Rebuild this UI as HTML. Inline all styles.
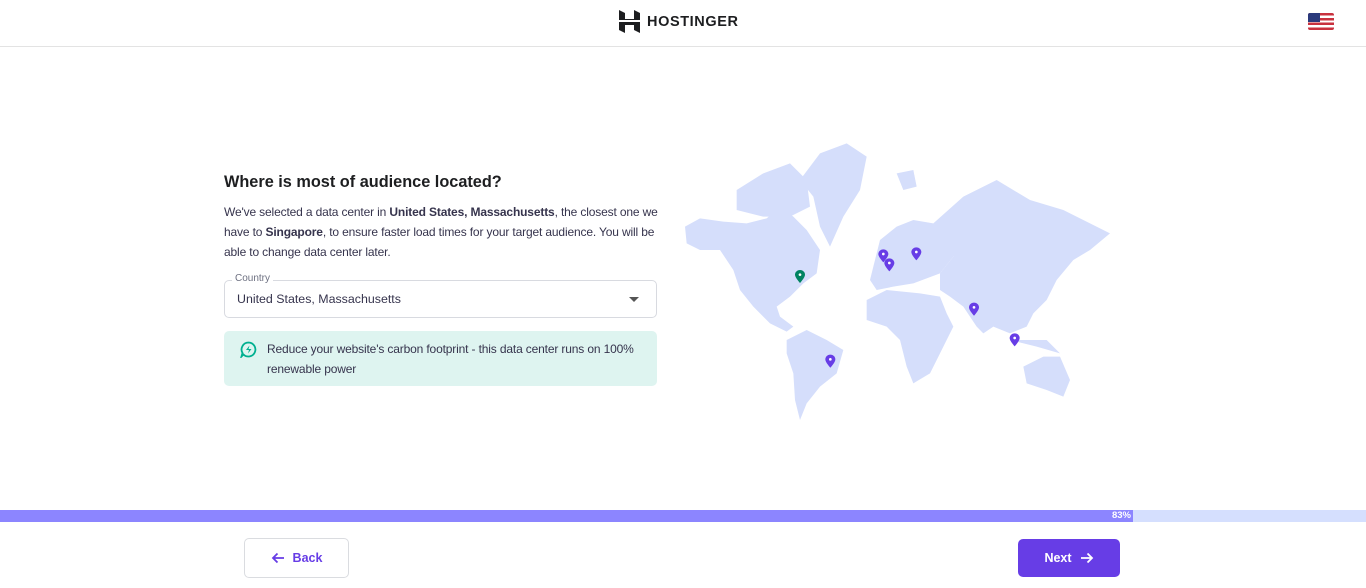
<!DOCTYPE html>
<html><head><meta charset="utf-8"><style>
*{margin:0;padding:0;box-sizing:border-box}
body{width:1366px;height:588px;overflow:hidden;background:#fff;font-family:"Liberation Sans",sans-serif;color:#1d1e20;position:relative}
.hdr{position:absolute;left:0;top:0;width:1366px;height:47px;border-bottom:1px solid #e3e3e3}
.logo{position:absolute;left:619px;top:10px;display:flex;align-items:center}
.logo span{font-weight:700;font-size:14.5px;letter-spacing:0.6px;margin-left:7px;color:#1d1e20}
.flag{position:absolute;left:1308px;top:13px;width:26px;height:17px;border-radius:2px;overflow:hidden;background:repeating-linear-gradient(#c8313e 0 2.43px,#fff 2.43px 4.86px)}
.flag i{position:absolute;left:0;top:0;width:12px;height:9px;background:#2a3a7c}
h1{position:absolute;left:224px;top:173px;font-size:16.3px;font-weight:700;white-space:nowrap}
p.d{position:absolute;left:224px;top:202px;width:440px;font-size:12px;letter-spacing:-0.15px;line-height:20px;color:#36344d}
.sel{position:absolute;left:224px;top:280px;width:433px;height:38px;border:1px solid #d8dae0;border-radius:5px}
.sel .lab{position:absolute;left:7px;top:-8px;background:#fff;padding:0 3px;font-size:10px;color:#6d7081}
.sel .v{position:absolute;left:12px;top:11px;font-size:12.4px;color:#36344d}
.sel .ar{position:absolute;right:17px;top:16px;border-left:5px solid transparent;border-right:5px solid transparent;border-top:5px solid #555}
.note{position:absolute;left:224px;top:331px;width:433px;height:55px;background:#def4f0;border-radius:5px}
.note .t{position:absolute;left:43px;top:8px;font-size:12px;letter-spacing:-0.15px;line-height:20px;color:#36344d;width:385px}
.note svg{position:absolute;left:16px;top:10px}
.bar{position:absolute;left:0;top:510px;width:1366px;height:12px;background:#d5dffe}
.bar .f{width:1133px;height:12px;background:#8c85ff;color:#fff;font-size:9.5px;font-weight:700;text-align:right;padding-right:2px;line-height:12px}
.back{position:absolute;left:244px;top:538px;width:105px;height:40px;border:1px solid #dadce0;border-radius:5px;color:#673de6;font-weight:700;font-size:12.5px;display:flex;align-items:center;justify-content:center;gap:8px}
.next{position:absolute;left:1018px;top:539px;width:102px;height:38px;background:#673de6;border-radius:5px;color:#fff;font-weight:700;font-size:12.5px;display:flex;align-items:center;justify-content:center;gap:8px}
.map{position:absolute;left:680px;top:140px}
</style></head><body>
<div class="hdr">
<div class="logo"><svg width="21" height="23" viewBox="0 0 21 23"><path d="M0 0l6 3v6l9 0V0l6 3v7H0z M0 12h21v11l-6-3v-5H6v8l-6-3z" fill="#1d1e20"/></svg><span>HOSTINGER</span></div>
<div class="flag"><i></i></div>
</div>
<h1>Where is most of audience located?</h1>
<p class="d">We've selected a data center in <b>United States, Massachusetts</b>, the closest one we have to <b>Singapore</b>, to ensure faster load times for your target audience. You will be able to change data center later.</p>
<div class="sel"><span class="lab">Country</span><span class="v">United States, Massachusetts</span><span class="ar"></span></div>
<div class="note"><svg width="17" height="17" viewBox="0 0 17 17"><path d="M8.5 1.5a7 7 0 1 1-5 12l-2 2 1-3.5a7 7 0 0 1 6-10.5z" fill="none" stroke="#00b090" stroke-width="1.8"/><path d="M9.5 4.5L6 9h3l-1 3.5L11.5 8h-3z" fill="#00b090"/></svg><div class="t">Reduce your website's carbon footprint - this data center runs on 100% renewable power</div></div>
<svg class="map" width="440" height="285" viewBox="0 0 1320 855">
<defs><path id="p" d="M0 0c-9 0-15 7-15 14 0 9 15 25 15 25s15-16 15-25c0-7-6-14-15-14z"/></defs>
<g fill="#d5defb">
<polygon points="15,260 60,235 130,245 200,250 260,235 300,200 340,230 380,270 420,330 410,400 370,430 330,470 290,500 300,530 340,560 320,575 270,550 220,500 180,450 160,390 120,330 60,330 20,310"/>
<polygon points="170,150 250,100 330,70 380,120 390,200 330,230 250,230 170,210"/>
<polygon points="360,120 420,40 500,10 560,50 540,150 490,230 450,320 420,260 400,170"/>
<polygon points="320,600 380,570 440,600 490,630 470,700 420,740 380,790 360,840 345,780 340,700 320,640"/>
<polygon points="580,380 600,300 650,260 700,240 760,250 800,300 820,350 780,400 700,430 640,440 590,450 570,420"/>
<polygon points="760,250 850,170 950,120 1050,180 1150,210 1290,280 1230,330 1180,360 1130,420 1100,480 1060,520 1040,560 990,580 940,560 910,580 890,560 850,500 810,470 780,450 780,400 820,350"/>
<polygon points="560,480 620,450 720,460 780,470 800,520 820,560 780,640 750,700 700,730 680,680 660,600 620,560 560,540"/>
<polygon points="1030,680 1090,650 1140,650 1170,720 1150,770 1100,750 1040,730"/>
<polygon points="990,600 1070,620 1140,640 1100,600"/>
<polygon points="650,100 700,90 710,140 670,150"/>
</g>
<g fill="#673de6">
<use href="#p" x="610" y="328"/><use href="#p" x="628" y="355"/><use href="#p" x="709" y="322"/><use href="#p" x="882" y="488"/><use href="#p" x="1004" y="580"/><use href="#p" x="451" y="644"/>
</g>
<use href="#p" x="360" y="390" fill="#008361"/>
<g fill="#fff"><circle cx="610" cy="342" r="4"/><circle cx="628" cy="369" r="4"/><circle cx="709" cy="336" r="4"/><circle cx="882" cy="502" r="4"/><circle cx="1004" cy="594" r="4"/><circle cx="451" cy="658" r="4"/><circle cx="360" cy="404" r="4"/></g>
</svg>
<div class="bar"><div class="f">83%</div></div>
<div class="back"><svg width="14" height="12" viewBox="0 0 14 12"><path d="M13 6H2M6.5 1.5L2 6l4.5 4.5" fill="none" stroke="#673de6" stroke-width="1.8"/></svg>Back</div>
<div class="next">Next<svg width="14" height="12" viewBox="0 0 14 12"><path d="M1 6h11M7.5 1.5L12 6l-4.5 4.5" fill="none" stroke="#fff" stroke-width="1.8"/></svg></div>
</body></html>
